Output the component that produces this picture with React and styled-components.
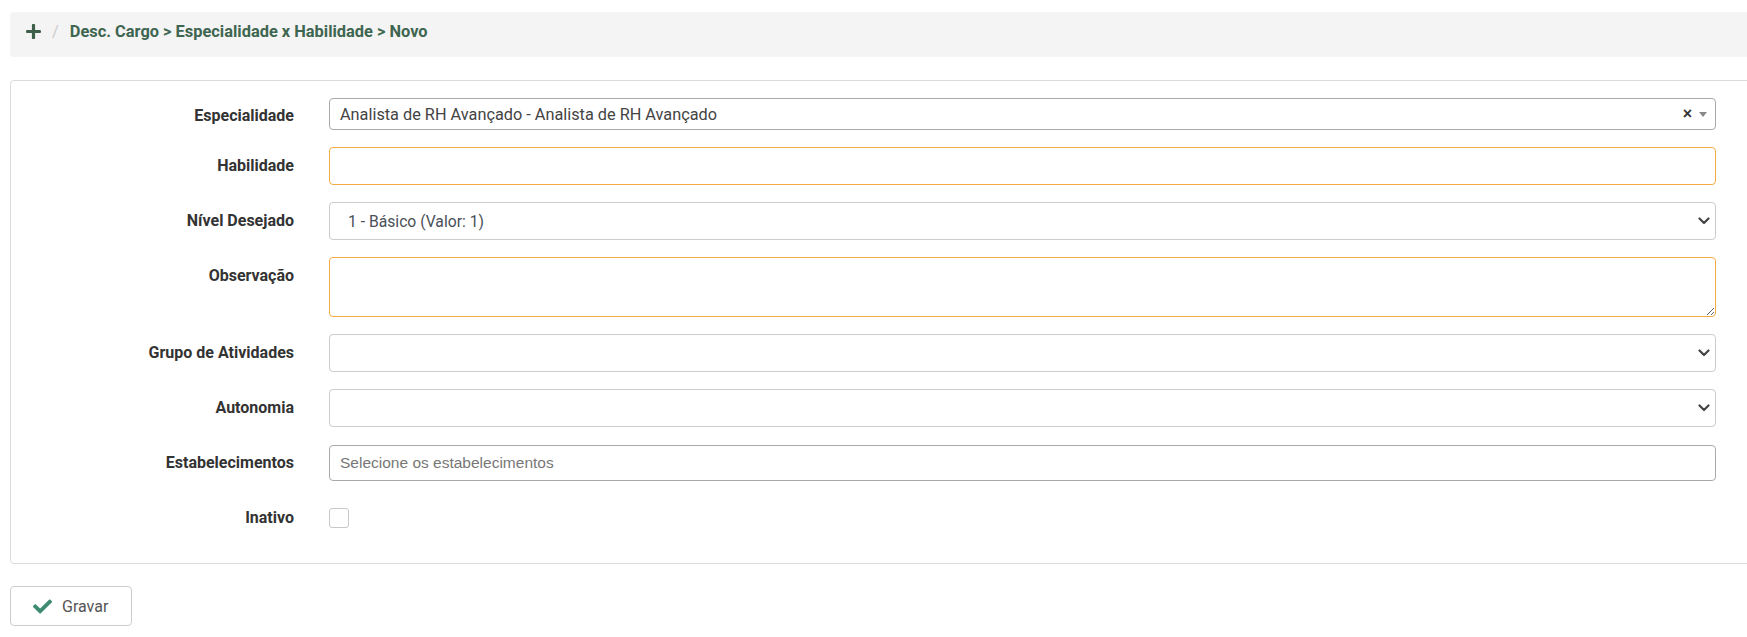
import React from 'react';
import styled, { createGlobalStyle } from 'styled-components';

const GlobalStyle = createGlobalStyle`
  html, body {
    margin: 0;
    background: #fff;
    overflow: hidden;
  }
  body {
    font-family: Roboto, "Liberation Sans", Arial, sans-serif;
    color: #333;
  }
`;

const Page = styled.div`
  padding: 12px 0 0 10px;
  margin-right: -10px;
`;

const Breadcrumb = styled.nav`
  display: flex;
  align-items: center;
  height: 45px;
  box-sizing: border-box;
  padding: 0 0 6px 16px;
  background: #f4f4f4;
  border-radius: 4px;
  font-size: 16.4px;
  font-weight: 700;
  color: #3e6550;
`;

const Divider = styled.span`
  margin: 0 11px 0 11px;
  color: #ccc;
  font-weight: 400;
`;

const Panel = styled.section`
  margin-top: 23px;
  padding: 17px 40px 26px 0;
  border: 1px solid #dcdcdc;
  border-radius: 4px;
`;

const Form = styled.div`
  display: grid;
  grid-template-columns: 283px 1fr;
  column-gap: 35px;
  row-gap: 17px;
`;

const Label = styled.label`
  text-align: right;
  font-size: 16px;
  font-weight: 700;
  color: #333;
  line-height: ${p => (p.$compact ? '36px' : '38px')};
  height: ${p => (p.$compact ? '32px' : '38px')};
`;

const Field = styled.div`
  position: relative;
  display: flex;
  align-items: center;
`;

const Select2Box = styled.div`
  display: flex;
  align-items: center;
  width: 100%;
  height: 32px;
  box-sizing: border-box;
  padding: 0 8px 0 10px;
  border: 1px solid #aaa;
  border-radius: 4px;
  font-size: 16.3px;
  color: #444;
`;

const Select2Text = styled.span`
  flex: 1;
`;

const Clear = styled.span`
  font-family: "Liberation Sans", Arial, sans-serif;
  font-weight: 700;
  font-size: 16px;
  color: #333;
  margin-right: 7px;
  line-height: 1;
`;

const Caret = styled.span`
  width: 0;
  height: 0;
  border-style: solid;
  border-width: 5px 4px 0 4px;
  border-color: #888 transparent transparent transparent;
`;

const TextInput = styled.input`
  width: 100%;
  height: 38px;
  box-sizing: border-box;
  padding: 6px 12px;
  border: 1px solid ${p => (p.$required ? '#f5ab45' : '#ccc')};
  border-radius: 4px;
  font: inherit;
  font-size: 16px;
  outline: none;
`;

const TextArea = styled.textarea`
  display: block;
  width: 100%;
  height: 60px;
  box-sizing: border-box;
  padding: 6px 12px;
  border: 1px solid #f5ab45;
  border-radius: 4px;
  font: inherit;
  font-size: 16px;
  resize: vertical;
  outline: none;
`;

const Select = styled.select`
  appearance: none;
  width: 100%;
  height: 38px;
  box-sizing: border-box;
  padding: 0 36px 0 18px;
  border: 1px solid #ccc;
  border-radius: 4px;
  background: #fff;
  font-family: Roboto, sans-serif;
  font-size: 15.7px;
  color: #495057;
  outline: none;
`;

const Chevron = styled.svg`
  position: absolute;
  right: 6px;
  top: 50%;
  transform: translateY(-50%);
  pointer-events: none;
`;

const MultiBox = styled.div`
  display: flex;
  align-items: center;
  width: 100%;
  height: 36px;
  box-sizing: border-box;
  padding: 0 10px;
  border: 1px solid #aaa;
  border-radius: 4px;
  font-family: "Liberation Sans", Arial, sans-serif;
  font-size: 15.5px;
  color: #777;
`;

const Check = styled.input`
  appearance: none;
  margin: 0;
  width: 20px;
  height: 20px;
  border: 1px solid #c8c8c8;
  border-radius: 3px;
  background: #fff;
`;

const Button = styled.button`
  display: flex;
  align-items: center;
  gap: 10px;
  margin-top: 22px;
  width: 122px;
  height: 40px;
  padding: 0 0 0 22px;
  border: 1px solid #ccc;
  border-radius: 4px;
  background: #fff;
  font-family: Roboto, sans-serif;
  font-size: 16px;
  color: #555;
`;

const PlusIcon = () => (
  <svg width="15" height="17" viewBox="0 0 448 512" fill="#3e5f4a">
    <path d="M416 208H272V64c0-17.67-14.33-32-32-32h-32c-17.67 0-32 14.33-32 32v144H32c-17.67 0-32 14.33-32 32v32c0 17.67 14.33 32 32 32h144v144c0 17.67 14.33 32 32 32h32c17.67 0 32-14.33 32-32V304h144c17.67 0 32-14.33 32-32v-32c0-17.67-14.33-32-32-32z" />
  </svg>
);

const CheckIcon = () => (
  <svg width="19" height="19" viewBox="0 0 512 512" fill="#3d8b70">
    <path d="M173.898 439.404l-166.4-166.4c-9.997-9.997-9.997-26.206 0-36.204l36.203-36.204c9.997-9.998 26.207-9.998 36.204 0L192 312.69 432.095 72.596c9.997-9.997 26.207-9.997 36.204 0l36.203 36.204c9.997 9.997 9.997 26.206 0 36.204l-294.4 294.401c-9.998 9.997-26.207 9.997-36.204-.001z" />
  </svg>
);

const DropSelect = ({ value, options = [] }) => (
  <Field>
    <Select defaultValue={value}>
      {options.map(o => (
        <option key={o} value={o}>{o}</option>
      ))}
    </Select>
    <Chevron width="12" height="8" viewBox="0 0 12 8">
      <polyline points="1.5,1.5 6,6 10.5,1.5" fill="none" stroke="#444" strokeWidth="2.2" strokeLinecap="round" strokeLinejoin="round" />
    </Chevron>
  </Field>
);

export default function App() {
  return (
    <>
      <GlobalStyle />
      <Page>
        <Breadcrumb>
          <PlusIcon />
          <Divider>/</Divider>
          Desc. Cargo &gt; Especialidade x Habilidade &gt; Novo
        </Breadcrumb>

        <Panel>
          <Form>
            <Label $compact>Especialidade</Label>
            <Field>
              <Select2Box>
                <Select2Text>Analista de RH Avançado - Analista de RH Avançado</Select2Text>
                <Clear>×</Clear>
                <Caret />
              </Select2Box>
            </Field>

            <Label>Habilidade</Label>
            <Field>
              <TextInput $required />
            </Field>

            <Label>Nível Desejado</Label>
            <DropSelect value="1 - Básico (Valor: 1)" options={['1 - Básico (Valor: 1)']} />

            <Label>Observação</Label>
            <TextArea />

            <Label>Grupo de Atividades</Label>
            <DropSelect value="" options={['']} />

            <Label>Autonomia</Label>
            <DropSelect value="" options={['']} />

            <Label>Estabelecimentos</Label>
            <Field>
              <MultiBox>Selecione os estabelecimentos</MultiBox>
            </Field>

            <Label>Inativo</Label>
            <Field>
              <Check type="checkbox" />
            </Field>
          </Form>
        </Panel>

        <Button>
          <CheckIcon />
          Gravar
        </Button>
      </Page>
    </>
  );
}
